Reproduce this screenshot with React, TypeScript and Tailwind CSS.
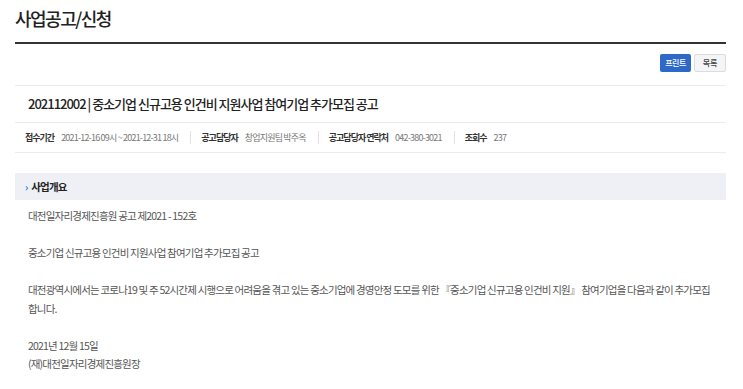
const font = { fontFamily: '"Noto Sans CJK KR", "Noto Sans", sans-serif' };

function MetaItem({ label, value, last }: { label: string; value: string; last?: boolean }) {
  return (
    <div className={"flex items-center " + (last ? "" : "border-r border-[#e2e2e2] pr-[12px] mr-[10px]")}>
      <span className="text-[9px] font-bold text-[#333] tracking-[-1px]">{label}</span>
      <span className="ml-[7px] text-[9px] text-[#777] tracking-[-0.8px]">{value}</span>
    </div>
  );
}

export default function App() {
  return (
    <div className="w-[743px] h-[389px] overflow-hidden bg-white pl-[15px] pr-[17px]" style={font}>
      {/* page title */}
      <div className="h-[44px] border-b-2 border-[#333] pt-[5px]">
        <h1 className="text-[18px] leading-[26px] text-[#222] font-medium tracking-[-1.5px]">사업공고/신청</h1>
      </div>

      <div className="flex justify-end gap-[3px] mt-[10px]">
        <button className="h-[18px] w-[31px] bg-[#2f69c8] text-white text-[8px] font-medium rounded-[2px] tracking-[-0.5px]">프린트</button>
        <button className="h-[18px] w-[32px] bg-[#f4f5f7] border border-[#dcdcdc] text-[#444] text-[8px] font-medium rounded-[2px]">목록</button>
      </div>

      {/* title */}
      <div className="mt-[13px] border-t border-b border-[#ececec] h-[38px] flex items-center pl-[13px]">
        <h2 className="text-[13px] font-medium text-[#222] tracking-[-1px]">
          202112002 | 중소기업 신규고용 인건비 지원사업 참여기업 추가모집 공고
        </h2>
      </div>

      {/* meta */}
      <div className="h-[30px] border-b border-[#ececec] flex items-center pl-[10px]">
        <MetaItem label="접수기간" value="2021-12-16 09시 ~ 2021-12-31 18시" />
        <MetaItem label="공고담당자" value="창업지원팀 박주옥" />
        <MetaItem label="공고담당자 연락처" value="042-380-3021" />
        <MetaItem label="조회수" value="237" last />
      </div>

      {/* section header */}
      <div className="mt-[20px] h-[27px] bg-[#eef0f5] flex items-center pl-[10px]">
        <span className="text-[#2a7ad6] text-[10px] font-bold mr-[3px]">›</span>
        <span className="text-[10.5px] font-bold text-[#222] tracking-[-0.8px]">사업개요</span>
      </div>

      {/* body */}
      <div className="pl-[13px] pt-[7px] text-[10.5px] leading-[18.5px] text-[#555] tracking-[-0.8px]">
        <p>대전일자리경제진흥원 공고 제2021 - 152호</p>
        <p className="mt-[18.5px]">중소기업 신규고용 인건비 지원사업 참여기업 추가모집 공고</p>
        <p className="mt-[18.5px]">
          <span className="whitespace-nowrap">
            대전광역시에서는 코로나19 및 주 52시간제 시행으로 어려움을 겪고 있는 중소기업에 경영안정 도모를 위한 『중소기업 신규고용 인건비 지원』 참여기업을 다음과 같이 추가모집
          </span>
          <br />
          합니다.
        </p>
        <p className="mt-[18.5px]">
          2021년 12월 15일
          <br />
          (재)대전일자리경제진흥원장
        </p>
      </div>
    </div>
  );
}
